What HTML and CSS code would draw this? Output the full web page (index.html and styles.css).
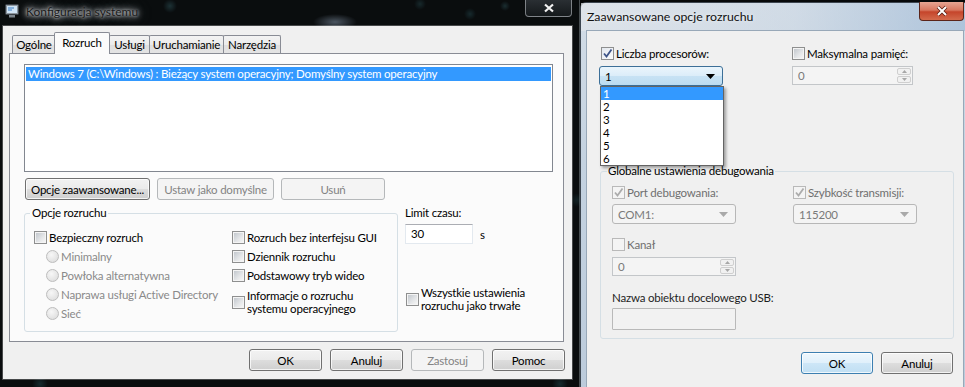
FILE: index.html
```html
<!DOCTYPE html>
<html>
<head>
    <meta charset="utf-8">
    <title>Konfiguracja systemu</title>
    <link rel="stylesheet" href="styles.css">
</head>
<body>
<div class="desktop">

    <!-- okno glowne: Konfiguracja systemu -->
    <div class="win win-main">
        <div class="titlebar">
            <svg class="app-icon" width="14" height="14" viewBox="0 0 14 14">
                <rect x="0.5" y="0.5" width="13" height="10" rx="1" fill="#8d969e" stroke="#3b4148"/>
                <rect x="2" y="2" width="10" height="7" fill="#cfe3f5"/>
                <path d="M3 4h6M3 6h4" stroke="#3d7fc4" stroke-width="1"/>
                <rect x="4" y="11" width="6" height="2.5" fill="#7c858d"/>
            </svg>
            <span class="title">Konfiguracja systemu</span>
            <div class="close close-dark">
                <svg width="12" height="10" viewBox="0 0 12 10">
                    <path d="M2 1.5L10 8.5M10 1.5L2 8.5" stroke="#f2f2f2" stroke-width="2.2"/>
                </svg>
            </div>
        </div>
        <div class="client">
            <div class="tabs">
                <div class="tab t1">Ogólne</div>
                <div class="tab t2 active">Rozruch</div>
                <div class="tab t3">Usługi</div>
                <div class="tab t4">Uruchamianie</div>
                <div class="tab t5">Narzędzia</div>
            </div>
            <div class="tabpage">
                <div class="listbox">
                    <div class="list-item selected">Windows 7 (C:\Windows) : Bieżący system operacyjny; Domyślny system operacyjny</div>
                </div>
                <div class="btn-row">
                    <div class="btn btn-adv">Opcje zaawansowane...</div>
                    <div class="btn disabled btn-default">Ustaw jako domyślne</div>
                    <div class="btn disabled btn-del">Usuń</div>
                </div>
                <div class="boot-area">
                    <fieldset class="group boot-group">
                        <legend>Opcje rozruchu</legend>
                        <div class="boot-cols">
                            <div class="col col-safe">
                                <div class="opt"><span class="cb"></span>Bezpieczny rozruch</div>
                                <div class="opt sub disabled"><span class="rb"></span>Minimalny</div>
                                <div class="opt sub disabled"><span class="rb"></span>Powłoka alternatywna</div>
                                <div class="opt sub disabled"><span class="rb"></span>Naprawa usługi Active Directory</div>
                                <div class="opt sub disabled"><span class="rb"></span>Sieć</div>
                            </div>
                            <div class="col">
                                <div class="opt"><span class="cb"></span>Rozruch bez interfejsu GUI</div>
                                <div class="opt"><span class="cb"></span>Dziennik rozruchu</div>
                                <div class="opt"><span class="cb"></span>Podstawowy tryb wideo</div>
                                <div class="opt opt-multi"><span class="cb"></span><span>Informacje o rozruchu<br>systemu operacyjnego</span></div>
                            </div>
                        </div>
                    </fieldset>
                    <div class="timeout">
                        <div class="label">Limit czasu:</div>
                        <div class="timeout-row">
                            <div class="textbox tb-timeout">30</div>
                            <span class="unit">s</span>
                        </div>
                        <div class="opt opt-multi opt-permanent"><span class="cb"></span><span>Wszystkie ustawienia<br>rozruchu jako trwałe</span></div>
                    </div>
                </div>
            </div>
            <div class="dlg-buttons">
                <div class="btn">OK</div>
                <div class="btn">Anuluj</div>
                <div class="btn disabled">Zastosuj</div>
                <div class="btn">Pomoc</div>
            </div>
        </div>
    </div>

    <!-- okno: Zaawansowane opcje rozruchu -->
    <div class="win win-adv">
        <div class="titlebar titlebar-light">
            <span class="title title-light">Zaawansowane opcje rozruchu</span>
            <div class="close close-red">
                <svg width="14" height="12" viewBox="0 0 14 12">
                    <path d="M3 2L11 10M11 2L3 10" stroke="#5a1e12" stroke-width="3.6"/>
                    <path d="M3 2L11 10M11 2L3 10" stroke="#ffffff" stroke-width="2"/>
                </svg>
            </div>
        </div>
        <div class="client client-adv">
            <div class="adv-top">
                <div class="opt adv-opt">
                    <span class="cb checked">
                        <svg width="11" height="11" viewBox="0 0 11 11"><path d="M2 5.5L4.5 8.5L9.5 1.5" fill="none" stroke="#3e5488" stroke-width="1.8"/></svg>
                    </span>Liczba procesorów:
                </div>
                <div class="opt adv-opt"><span class="cb"></span>Maksymalna pamięć:</div>
                <div class="combo-wrap">
                    <div class="combo combo-open">
                        <span>1</span>
                        <svg width="9" height="5" viewBox="0 0 9 5"><path d="M0 0h9L4.5 5z" fill="#000"/></svg>
                    </div>
                    <div class="dropdown">
                        <div class="dd-item selected">1</div>
                        <div class="dd-item">2</div>
                        <div class="dd-item">3</div>
                        <div class="dd-item">4</div>
                        <div class="dd-item">5</div>
                        <div class="dd-item">6</div>
                    </div>
                </div>
                <div class="spin spin-mem">
                    <span class="spin-val">0</span>
                    <div class="spin-btns">
                        <div class="spin-btn"><svg width="5" height="3" viewBox="0 0 5 3"><path d="M0 3h5L2.5 0z" fill="#a7a7a7"/></svg></div>
                        <div class="spin-btn"><svg width="5" height="3" viewBox="0 0 5 3"><path d="M0 0h5L2.5 3z" fill="#a7a7a7"/></svg></div>
                    </div>
                </div>
            </div>

            <fieldset class="group debug-group">
                <legend>Globalne ustawienia debugowania</legend>
                <div class="debug-grid">
                    <div class="opt disabled">
                        <span class="cb cb-disabled checked">
                            <svg width="11" height="11" viewBox="0 0 11 11"><path d="M2 5.5L4.5 8.5L9.5 1.5" fill="none" stroke="#acacac" stroke-width="1.8"/></svg>
                        </span>Port debugowania:
                    </div>
                    <div class="opt disabled">
                        <span class="cb cb-disabled checked">
                            <svg width="11" height="11" viewBox="0 0 11 11"><path d="M2 5.5L4.5 8.5L9.5 1.5" fill="none" stroke="#acacac" stroke-width="1.8"/></svg>
                        </span>Szybkość transmisji:
                    </div>
                    <div class="combo combo-disabled">
                        <span>COM1:</span>
                        <svg width="9" height="5" viewBox="0 0 9 5"><path d="M0 0h9L4.5 5z" fill="#a9a9a9"/></svg>
                    </div>
                    <div class="combo combo-disabled">
                        <span>115200</span>
                        <svg width="9" height="5" viewBox="0 0 9 5"><path d="M0 0h9L4.5 5z" fill="#a9a9a9"/></svg>
                    </div>
                </div>
                <div class="opt disabled kanal"><span class="cb cb-disabled"></span>Kanał</div>
                <div class="spin spin-channel">
                    <span class="spin-val">0</span>
                    <div class="spin-btns">
                        <div class="spin-btn"><svg width="5" height="3" viewBox="0 0 5 3"><path d="M0 3h5L2.5 0z" fill="#a7a7a7"/></svg></div>
                        <div class="spin-btn"><svg width="5" height="3" viewBox="0 0 5 3"><path d="M0 0h5L2.5 3z" fill="#a7a7a7"/></svg></div>
                    </div>
                </div>
                <div class="usb-label">Nazwa obiektu docelowego USB:</div>
                <div class="textbox tb-usb"></div>
            </fieldset>

            <div class="dlg-buttons adv-buttons">
                <div class="btn btn-focus">OK</div>
                <div class="btn">Anuluj</div>
            </div>
        </div>
    </div>

</div>
</body>
</html>
```

FILE: styles.css
```css
*{padding: 0;margin: 0;box-sizing: border-box;}
body{
    width: 965px;
    height: 387px;
    overflow: hidden;
    background: #060809;
    font-family: Lato, "Noto Sans", sans-serif;
    font-size: 11.5px;
    letter-spacing: -0.2px;
    color: #000;
}
.desktop{
    position: relative;
    width: 965px;
    height: 387px;
    overflow: hidden;
    background:
        radial-gradient(ellipse 22px 8px at 335px 22px, rgba(200,225,255,.75), transparent),
        radial-gradient(circle 7px at 170px 6px, rgba(90,170,180,.5), transparent),
        radial-gradient(circle 6px at 470px 14px, rgba(70,150,160,.45), transparent),
        radial-gradient(circle 5px at 505px 6px, rgba(90,170,180,.45), transparent),
        radial-gradient(circle 6px at 420px 4px, rgba(80,160,170,.4), transparent),
        radial-gradient(circle 8px at 40px 384px, rgba(60,140,150,.5), transparent),
        radial-gradient(circle 8px at 560px 384px, rgba(60,140,150,.5), transparent),
        radial-gradient(circle 7px at 577px 200px, rgba(60,140,150,.35), transparent),
        #07090a;
}

/* okna */
.win{
    position: absolute;
    display: flex;
    flex-direction: column;
}
.win-main{
    left: 0;
    top: 0;
    width: 580px;
    height: 387px;
    padding: 0 7px 8px 3px;
    background: rgba(12,16,18,.55);
    border-right: 1px solid rgba(190,200,205,.35);
}
.win-adv{
    left: 580px;
    top: 2px;
    width: 390px;
    height: 395px;
    padding: 0 6px 0 6px;
    border: 1px solid #3d4650;
    border-radius: 6px 6px 0 0;
    background: linear-gradient(180deg, #d3dde7 0%, #c4d2e0 40%, #bccbdb 100%);
}

.titlebar{
    display: flex;
    align-items: flex-start;
    height: 26px;
    flex: none;
}
.app-icon{
    margin: 4px 0 0 2px;
}
.title{
    margin: 5px 0 0 7px;
    font-size: 12px;
    letter-spacing: 0;
    line-height: 14px;
    color: #1a1a1a;
    text-shadow:
        0 0 3px rgba(235,238,240,.95),
        0 0 6px rgba(215,220,225,.9),
        0 0 10px rgba(190,195,200,.8),
        0 0 14px rgba(170,175,180,.6);
}
.titlebar-light{
    height: 28px;
    align-items: center;
    background: linear-gradient(90deg, rgba(226,230,235,.7) 0%, rgba(205,216,228,.4) 55%, rgba(150,180,212,.6) 100%);
    margin: 0 -6px;
    padding: 0 5px 0 6px;
}
.title-light{
    margin: 0;
    font-size: 12.3px;
    color: #111;
    text-shadow: 0 0 4px rgba(255,255,255,.8);
}
.close{
    margin-left: auto;
    align-self: flex-start;
    display: flex;
    align-items: center;
    justify-content: center;
}
.close-dark{
    width: 47px;
    height: 17px;
    border: 1px solid rgba(200,205,210,.55);
    border-top: none;
    border-radius: 0 0 4px 4px;
    background: linear-gradient(180deg, #2a2f33, #15191b);
}
.close-red{
    width: 45px;
    height: 19px;
    margin-top: -1px;
    border: 1px solid #5b2419;
    border-top: none;
    border-radius: 0 0 4px 4px;
    background: linear-gradient(180deg, #e6a593 0%, #d8775f 45%, #c5452b 55%, #d36a4c 100%);
}

.client{
    flex: 1;
    display: flex;
    flex-direction: column;
    background: #f0f0f0;
    box-shadow: 0 0 0 1px rgba(255,255,255,.25);
}
.client-adv{
    padding-left: 14px;
    box-shadow: 0 0 0 1px #98a8b8;
}

/* zakladki */
.tabs{
    display: flex;
    align-items: flex-end;
    height: 27px;
    padding: 6px 0 0 9px;
}
.tab{
    height: 18px;
    line-height: 17px;
    text-align: center;
    border: 1px solid #898c95;
    border-bottom: none;
    border-radius: 2px 2px 0 0;
    background: linear-gradient(180deg, #f3f3f3 0%, #ebebeb 50%, #dedede 51%, #e4e4e4 100%);
    margin-right: -1px;
}
.tab.active{
    height: 22px;
    line-height: 19px;
    margin: 0 -1px -1px -1px;
    background: #fbfbfb;
    position: relative;
}
.t1{width: 44px;}
.t2{width: 56px;}
.t3{width: 41px;}
.t4{width: 75px;}
.t5{width: 58px;}

.tabpage{
    margin-left: 6px;
    width: 555px;
    height: 289px;
    border: 1px solid #898c95;
    background: #fbfbfb;
}
.listbox{
    margin: 10px 0 0 14px;
    width: 529px;
    height: 108px;
    border: 1px solid #828790;
    background: #fff;
    padding: 2px 1px;
}
.list-item{
    line-height: 14px;
    padding-left: 2px;
    white-space: nowrap;
}
.list-item.selected{
    background: #3399ff;
    color: #fff;
}

/* przyciski */
.btn-row{
    display: flex;
    gap: 7px;
    margin: 6px 0 0 15px;
}
.btn{
    display: flex;
    align-items: center;
    justify-content: center;
    height: 22px;
    width: 73px;
    border: 1px solid #707070;
    border-radius: 3px;
    background: linear-gradient(180deg, #f2f2f2 0%, #ebebeb 48%, #dddddd 52%, #cfcfcf 100%);
    box-shadow: inset 0 0 0 1px rgba(255,255,255,.75);
    white-space: nowrap;
}
.btn.disabled{
    border-color: #b5b8ba;
    background: #f4f4f4;
    color: #838383;
    box-shadow: none;
}
.btn-focus{
    border-color: #3c7fb1;
    background: linear-gradient(180deg, #eef7fd 0%, #e0f0fb 48%, #cde6f7 52%, #c0dff3 100%);
}
.btn-adv{width: 125px;}
.btn-default{width: 117px;}
.btn-del{width: 104px;}

.dlg-buttons{
    display: flex;
    justify-content: flex-end;
    gap: 8px;
    margin-top: 7px;
    padding-right: 7px;
}
.adv-buttons{
    margin-top: 13px;
    padding-right: 10px;
}
.adv-buttons .btn{width: 72px;}

/* grupy */
.group{
    border: 1px solid #d5dfe5;
    border-radius: 3px;
}
.group legend{
    margin-left: 5px;
    padding: 0 2px;
    line-height: 14px;
}
.boot-area{
    display: flex;
    margin: 6px 0 0 14px;
}
.boot-group{
    width: 374px;
    height: 126px;
}
.boot-cols{
    display: flex;
    padding: 8px 0 0 9px;
}
.col-safe{width: 198px;}

.opt{
    display: flex;
    align-items: center;
    height: 19px;
    white-space: nowrap;
}
.opt.sub{padding-left: 12px;}
.opt.disabled{color: #6f6f6f;}
.opt.sub.disabled{color: #8a8a8a;}
.opt-multi{
    height: auto;
    margin-top: 4px;
    line-height: 13px;
}

.cb{
    position: relative;
    display: flex;
    align-items: center;
    justify-content: center;
    width: 13px;
    height: 13px;
    flex: none;
    margin-right: 2px;
    border: 1px solid #8e8f8f;
    background: #f4f4f4;
}
.cb::after{
    content: '';
    position: absolute;
    left: 1px;
    top: 1px;
    width: 9px;
    height: 9px;
    background: linear-gradient(135deg, #c3c8ce 0%, #e4e6e8 60%, #f5f5f5 100%);
}
.cb.checked::after{display: none;}
.cb.checked{background: linear-gradient(135deg, #e3e8ef, #fbfbfb);}
.cb-disabled{border-color: #b9b9b9;}
.cb-disabled::after{background: #f4f4f4;}
.cb-disabled.checked{background: #f4f4f4;}

.rb{
    width: 13px;
    height: 13px;
    flex: none;
    margin-right: 2px;
    border-radius: 50%;
    border: 1px solid #bdbdbd;
    background: radial-gradient(circle at 40% 35%, #f7f7f7 0%, #e2e2e2 70%, #d8d8d8 100%);
}

.timeout{
    margin-left: 7px;
}
.label{line-height: 14px;}
.timeout-row{
    display: flex;
    align-items: center;
    margin-top: 4px;
}
.textbox{
    border: 1px solid #e3e9ef;
    border-top-color: #abadb3;
    background: #fff;
}
.tb-timeout{
    width: 68px;
    height: 20px;
    line-height: 18px;
    padding-left: 5px;
}
.unit{margin-left: 7px;}
.opt-permanent{
    margin-top: 42px;
    margin-left: 1px;
}

/* okno zaawansowane */
.adv-top{
    display: grid;
    grid-template-columns: 191px 130px;
    row-gap: 6px;
    margin-top: 15px;
}
.adv-opt{height: 14px;}

.combo-wrap{
    position: relative;
    margin-left: -2px;
    width: 124px;
}
.combo{
    display: flex;
    align-items: center;
    justify-content: space-between;
    width: 124px;
    height: 20px;
    padding: 0 7px 0 5px;
    border-radius: 3px;
}
.combo-open{
    border: 1px solid #3c6f98;
    background: linear-gradient(180deg, #eaf5fc 0%, #dcedf9 48%, #c7e2f4 52%, #bcdcf1 100%);
}
.combo-disabled{
    border: 1px solid #b7b7b7;
    background: #f4f4f4;
    color: #7a7a7a;
}
.dropdown{
    position: absolute;
    left: 1px;
    top: 20px;
    width: 124px;
    border: 1px solid #646464;
    background: #fff;
    box-shadow: 2px 2px 3px rgba(0,0,0,.35);
}
.dd-item{
    line-height: 13px;
    padding-left: 2px;
}
.dd-item.selected{
    background: #3399ff;
    color: #fff;
}

.spin{
    display: flex;
    align-items: center;
    justify-content: space-between;
    width: 121px;
    height: 19px;
    padding: 0 1px 0 5px;
    border: 1px solid #c3c6c9;
    background: #f4f4f4;
    color: #7a7a7a;
}
.spin-channel{width: 124px;}
.spin-btns{
    display: flex;
    flex-direction: column;
    gap: 1px;
}
.spin-btn{
    display: flex;
    align-items: center;
    justify-content: center;
    width: 14px;
    height: 7px;
    border: 1px solid #cfcfcf;
    border-radius: 2px;
    background: #f1f1f1;
}

.debug-group{
    margin: 78px 0 0 -1px;
    width: 354px;
    height: 175px;
    padding: 0 0 0 11px;
}
.debug-group legend{
    margin-left: -5px;
    padding: 0 1px;
}
.debug-grid{
    display: grid;
    grid-template-columns: 181px 124px;
    row-gap: 5px;
    margin-top: 7px;
}
.debug-grid .opt{height: 14px;}
.kanal{
    height: 14px;
    margin-top: 13px;
}
.spin-channel{margin-top: 6px;}
.usb-label{
    margin-top: 15px;
    line-height: 14px;
    color: #1e1e1e;
}
.tb-usb{
    margin-top: 3px;
    width: 124px;
    height: 22px;
    border: 1px solid #b9b9b9;
    background: #f2f2f2;
    border-radius: 1px;
}
```
